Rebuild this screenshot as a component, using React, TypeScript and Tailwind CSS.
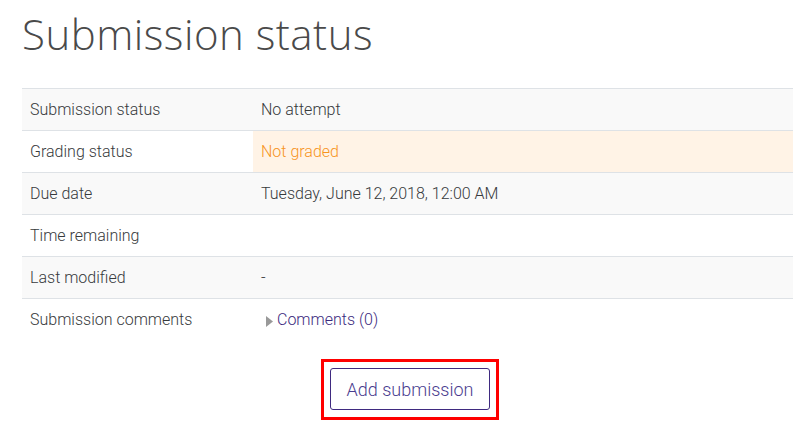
import React from "react";

const rows: { label: string; value: React.ReactNode; shaded: boolean; warn?: boolean }[] = [
  { label: "Submission status", value: "No attempt", shaded: true },
  { label: "Grading status", value: "Not graded", shaded: false, warn: true },
  { label: "Due date", value: "Tuesday, June 12, 2018, 12:00 AM", shaded: true },
  { label: "Time remaining", value: "", shaded: false },
  { label: "Last modified", value: "-", shaded: true },
];

export default function App() {
  return (
    <div className="w-[806px] h-[426px] bg-white overflow-hidden pl-[22px] pr-[13px]" style={{ fontFamily: "Roboto, 'Liberation Sans', sans-serif" }}>
      <h2
        className="text-[42px] leading-none font-light text-[#4a4a4a] pt-[13px] pb-[33px] tracking-[0.5px]"
        style={{ fontFamily: "'Open Sans', Lato, sans-serif" }}
      >
        Submission status
      </h2>
      <div className="flex flex-col text-[16px] font-light text-[#373a3c]">
        {rows.map((r) => (
          <div
            key={r.label}
            className={`flex h-[42px] border-t border-[#dee2e6] ${r.shaded ? "bg-[#f9f9f9]" : "bg-white"}`}
          >
            <div className="w-[231px] shrink-0 px-2 flex items-center">{r.label}</div>
            <div
              className={`flex-1 px-2 flex items-center ${r.warn ? "bg-[#fff3e6] text-[#f7941d]" : ""}`}
            >
              {r.value}
            </div>
          </div>
        ))}
        <div className="flex h-[42px] border-t border-[#dee2e6] bg-white">
          <div className="w-[231px] shrink-0 px-2 flex items-center">Submission comments</div>
          <div className="flex-1 px-2 flex items-center">
            <svg width="7" height="11" viewBox="0 0 7 11" className="ml-[5px] mr-[4px] mt-[3px]">
              <path d="M0 0 L7 5.5 L0 11 Z" fill="#999" />
            </svg>
            <span className="text-[#3b2a7e]">Comments (0)</span>
          </div>
        </div>
      </div>
      <div className="flex justify-center pt-[19px] pl-[5px]">
        <div className="border-[3px] border-[#ff0000] pt-[6px] pb-[7px] px-[6px]">
          <button className="w-[160px] h-[42px] rounded-[3px] border border-[#3f2a80] bg-white text-[18px] font-light text-[#4a3d8f]">
            Add submission
          </button>
        </div>
      </div>
    </div>
  );
}
